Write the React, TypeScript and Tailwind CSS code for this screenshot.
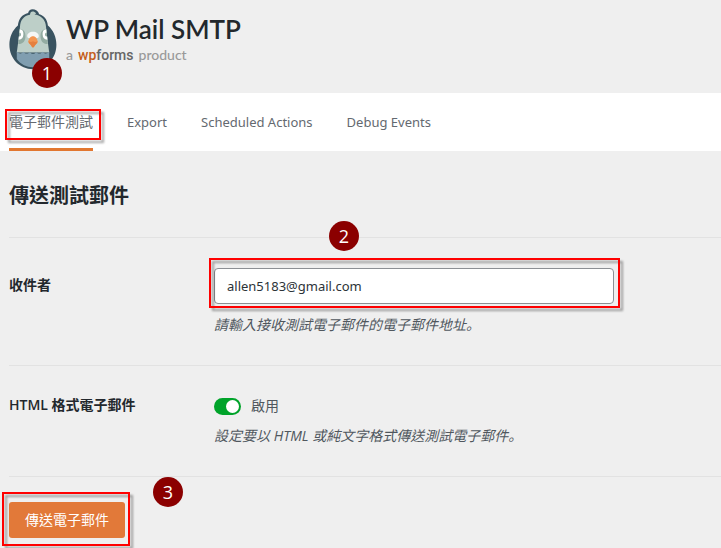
import type { ReactNode } from 'react';

function Badge({ n, className }: { n: number; className: string }) {
  return (
    <span
      className={`absolute z-10 flex size-[30px] items-center justify-center rounded-full bg-[#8b0000] font-['Open_Sans',sans-serif] text-lg leading-none font-normal text-white ${className}`}
    >
      {n}
    </span>
  );
}

function Highlight({ className }: { className: string }) {
  return (
    <span
      aria-hidden="true"
      className={`pointer-events-none absolute border-2 border-[#ff0000] drop-shadow-[3px_3px_1px_rgba(0,0,0,0.35)] ${className}`}
    />
  );
}

function Pigeon() {
  return (
    <svg width="48" height="61" viewBox="0 0 48 61" aria-hidden="true">
      <path
        d="M23.500.3c-2.300 0-3.900 1.500-4.400 3.600C13 5.400 9.600 9.800 8.900 16.400 3.500 21 .4 28 .4 35.800.4 49.600 10.800 60.200 24 60.200s23.400-10.600 23.400-24.400c0-7.800-3.100-14.800-8.500-19.400C38.200 10.300 35 6.500 30.200 5.300 29.300 2 26.300.3 23.500.3Z"
        fill="#395360"
      />
      <path
        d="M23.600 2.400c-1.600 0-2.400 1.200-2.600 3.300-6.300 1-9.700 5.400-10 12.100L9.600 30 7.800 43.500h32.400L38.400 30 37 17.800c-.3-6.300-3.900-10.400-9.500-12.100l-2-.3 1.600-1c-.9-1.400-2.200-2-3.500-2Z"
        fill="#bdcfc8"
      />
      <path d="M10.500 20.300c3.500-.5 6 2 6 6.600 0 4.800-2.600 8.300-7.200 8.200ZM37.500 20.300c-3.500-.5-6 2-6 6.600 0 4.800 2.600 8.300 7.200 8.200Z" fill="#93aca2" />
      <path d="M10.900 20.200c2.700.1 3.700 2.300 3.500 5.300-.2 3.200-1.700 5.300-4.800 5.200l.3-3.300c1.400.2 2.100-.6 2.100-1.900s-.7-1.900-1.500-1.800ZM37.100 20.200c-2.700.1-3.700 2.300-3.500 5.300.2 3.200 1.700 5.300 4.800 5.200l-.3-3.300c-1.400.2-2.100-.6-2.100-1.900s.7-1.900 1.500-1.800Z" fill="#fff" />
      <path
        d="M7.800 42.500c2 2.600 4.600 2.600 6.600.2 2 2.500 4.400 2.500 6.400.2 2 2.500 4.400 2.500 6.400 0 2 2.300 4.400 2.300 6.400-.2 2 2.400 4.600 2.400 6.600-.2v7.500C36 55.600 30.500 58.200 24 58.200S12 55.600 7.800 50Z"
        fill="#809eb0"
      />
      <path d="M24 22.700c-3.500 0-5.800 1.900-5.800 4.300 0 2 1.900 2.700 3.500 2h4.600c1.600.7 3.500 0 3.500-2 0-2.400-2.300-4.300-5.800-4.300Z" fill="#f5f7f6" />
      <path d="M24 27.200c-2.700 0-4.600 2.500-4.600 5.500 0 1.400 1.100 2.200 1.900 2.900 1 .8 1.500 2.900 2.700 2.900s1.700-2.100 2.700-2.900c.8-.7 1.900-1.500 1.900-2.900 0-3-1.900-5.500-4.600-5.500Z" fill="#f39652" />
      <path d="M19.500 32.100c1.400 1.300 2.900 1.200 4.500.2 1.600 1 3.100 1.100 4.500-.2 0 1.700-1 2.600-1.800 3.400-1 .9-1.500 3-2.700 3s-1.700-2.100-2.700-3c-.8-.8-1.800-1.700-1.800-3.400Z" fill="#e5803f" />
    </svg>
  );
}

function Row({ label, htmlFor, tall, children }: { label: string; htmlFor: string; tall?: boolean; children: ReactNode }) {
  return (
    <div className="flex border-t border-[#e2e2e2] py-[30px]">
      <label
        htmlFor={htmlFor}
        className={`w-[205px] shrink-0 leading-[18px] font-semibold text-[#23282d] ${tall ? 'pt-2' : ''}`}
      >
        {label}
      </label>
      <div className="min-w-0 flex-1">{children}</div>
    </div>
  );
}

// The mainland face sets the full stop at the lower left of its cell.
function Hint({ className, children }: { className: string; children: string }) {
  return (
    <p className={`leading-5 italic ${className}`}>
      {children}
      <span className="font-['Noto_Sans_CJK_SC',sans-serif] leading-none">。</span>
    </p>
  );
}

const links = ['Export', 'Scheduled Actions', 'Debug Events'];

export default function App() {
  return (
    <div className="min-h-screen overflow-hidden bg-[#efefef] font-['Open_Sans','Noto_Sans_CJK_TC',sans-serif] text-sm text-[#50575e]">
      <header className="flex h-[93px] items-start gap-[9px] px-[9px] pt-[9px]">
        <div className="relative">
          <Pigeon />
          <Badge n={1} className="top-[49px] left-[23px]" />
        </div>
        <div className="pt-1 font-['Lato',sans-serif]">
          <h1 className="text-[26px] leading-8 font-semibold text-[#23282c]">WP Mail SMTP</h1>
          <p className="flex items-baseline gap-[5px] text-sm leading-5 font-medium text-[#999]">
            <span>a</span>
            <span className="font-['Roboto',sans-serif] text-sm font-medium text-[#666]">
              <span className="text-[#c45e1b]">wp</span>forms
            </span>
            <span>product</span>
          </p>
        </div>
      </header>

      <nav className="flex h-[58px] gap-[34px] bg-white px-[9px] text-[#646970]">
        <a href="#test" aria-current="page" className="relative border-b-3 border-[#e27730] pt-[19px] leading-5">
          電子郵件測試
          <Highlight className="top-4 -right-2 -left-1 h-[31px]" />
        </a>
        {links.map((l) => (
          <a key={l} href="#" className="pt-[19px] font-['Noto_Sans',sans-serif] text-[13px] leading-5">
            {l}
          </a>
        ))}
      </nav>

      <main className="pl-[9px]">
        <h2 className="pt-[31px] pb-[27px] text-xl leading-7 font-bold text-[#23282d]">傳送測試郵件</h2>

        <Row label="收件者" htmlFor="recipient" tall>
          <div className="relative w-[400px] max-w-full">
            <input
              id="recipient"
              type="email"
              defaultValue="allen5183@gmail.com"
              className="block h-9 w-full rounded border border-[#8c8f94] bg-white px-3 font-['Noto_Sans',sans-serif] text-[13px] text-[#2c3338] outline-none"
            />
            <Highlight className="-top-[10px] -right-[6px] -bottom-1 -left-[5px]" />
            <Badge n={2} className="-top-[47px] left-[115px]" />
          </div>
          <Hint className="pt-[11px]">請輸入接收測試電子郵件的電子郵件地址</Hint>
        </Row>

        <Row label="HTML 格式電子郵件" htmlFor="html">
          <label className="flex h-5 items-center">
            <input id="html" type="checkbox" defaultChecked className="peer sr-only" />
            <span className="flex h-[17px] w-[27px] items-center rounded-full bg-[#8c8f94] p-[2px] peer-checked:justify-end peer-checked:bg-[#00a32a]">
              <span className="size-[13px] rounded-full bg-white" />
            </span>
            <span className="pl-[10px] leading-5">啟用</span>
          </label>
          <Hint className="pt-[10px]">設定要以 HTML 或純文字格式傳送測試電子郵件</Hint>
        </Row>

        <div className="border-t border-[#e2e2e2] pt-[25px] pb-[10px]">
          <div className="relative w-fit">
            <button type="button" className="block h-9 rounded-[3px] bg-[#e27939] px-4 text-white">
              傳送電子郵件
            </button>
            <Highlight className="-top-[10px] -right-[5px] -bottom-2 -left-[7px]" />
            <Badge n={3} className="-top-[25px] left-36" />
          </div>
        </div>
      </main>
    </div>
  );
}
